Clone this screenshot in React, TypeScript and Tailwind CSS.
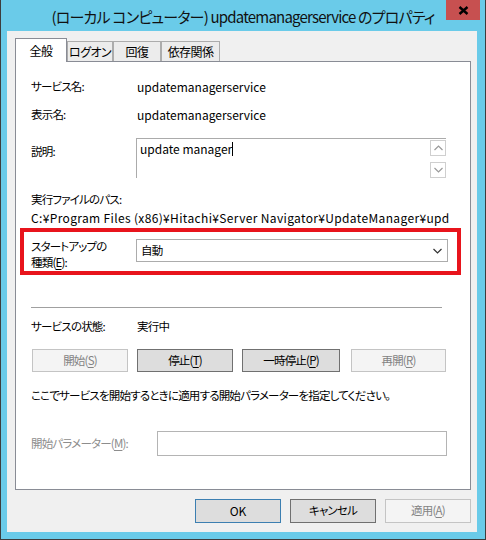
import React from 'react';

const Chevron = ({ up = false, color = '#333' }: { up?: boolean; color?: string }) => (
    <svg width="9" height="6" viewBox="0 0 9 6">
        <path d={up ? 'M0.5 5 L4.5 1 L8.5 5' : 'M0.5 1 L4.5 5 L8.5 1'} fill="none" stroke={color} strokeWidth="1.2" />
    </svg>
);

const Key = ({ k }: { k: string }) => <span className="underline underline-offset-2">{k}</span>;

// latin-only strings keep the normal 12px metrics
const latin = 'text-[12px] tracking-normal';

const Btn = ({ children, w, kind }: { children: React.ReactNode; w: string; kind: 'normal' | 'disabled' | 'default' }) => {
    const styles = {
        normal: 'bg-[#dddddd] border-[#707070] text-black',
        disabled: 'bg-[#f4f4f4] border-[#c4c4c4] text-[#838383]',
        default: 'bg-[#dddddd] border-[#3c7fb1] text-black',
    };
    return <div className={`${w} h-full border flex items-center justify-center ${styles[kind]}`}>{children}</div>;
};

export default function App() {
    return (
        <div className="w-[486px] h-[540px] bg-[#6acbe9] border-x border-b border-[#3d3d3d] flex flex-col font-['Noto_Sans_CJK_JP',sans-serif] [font-feature-settings:'palt'] text-[11.5px] tracking-[-0.8px] text-black">
            {/* title bar */}
            <div className="h-[31px] shrink-0 relative flex items-center justify-center">
                <span className="text-[15px] tracking-[-0.8px] pt-[3px] text-[#111] whitespace-nowrap">(ローカル コンピューター) updatemanagerservice のプロパティ</span>
                <div className="absolute right-[5px] top-0 w-[34px] h-[20px] bg-[#c75050] flex items-center justify-center">
                    <svg width="11" height="9" viewBox="0 0 11 9">
                        <path d="M1.5 1 L9.5 8 M9.5 1 L1.5 8" stroke="#000" strokeWidth="2.4" />
                    </svg>
                </div>
            </div>

            {/* client area */}
            <div className="flex-1 ml-[6px] mr-[8px] mb-[7px] bg-[#f0f0f0] pl-[8px] pr-[6px] pt-[7px] flex flex-col">
                {/* tabs */}
                <div className="h-[23px] flex items-end relative z-10 whitespace-nowrap text-[12px] tracking-[-0.6px]">
                    <div className="w-[52px] h-[24px] -mb-px bg-white border-t border-x border-[#898c95] flex items-center justify-center">全般</div>
                    <div className="w-[46px] h-[20px] bg-[#ececec] border-t border-x border-[#acacac] flex items-center justify-center">ログオン</div>
                    <div className="w-[48px] h-[20px] bg-[#ececec] border-t border-x border-[#acacac] flex items-center justify-center">回復</div>
                    <div className="w-[59px] h-[20px] bg-[#ececec] border-t border-x border-[#acacac] flex items-center justify-center">依存関係</div>
                </div>

                {/* panel */}
                <div className="h-[429px] bg-white border border-[#898c95] pl-[15px] flex flex-col">
                    <div className="mt-[17px] h-[16px] flex items-center">
                        <div className="w-[106px]">サービス名:</div>
                        <div className={latin}>updatemanagerservice</div>
                    </div>
                    <div className="mt-[12px] h-[16px] flex items-center">
                        <div className="w-[106px]">表示名:</div>
                        <div className={latin}>updatemanagerservice</div>
                    </div>
                    <div className="mt-[15px] flex">
                        <div className="w-[105px] pt-[5px] leading-[16px]">説明:</div>
                        <div className="w-[310px] h-[40px] bg-white border-t border-l border-[#ababab] flex">
                            <div className={`flex-1 pl-[3px] pt-[2px] leading-[16px] flex items-start ${latin}`}>
                                <span>update manager</span>
                                <span className="w-px h-[14px] mt-[1px] bg-black" />
                            </div>
                            <div className="w-[16px] flex flex-col pt-px gap-[6px]">
                                <div className="h-[16px] border border-[#cfcfcf] flex items-center justify-center">
                                    <Chevron up color="#9a9a9a" />
                                </div>
                                <div className="h-[16px] border border-[#cfcfcf] flex items-center justify-center">
                                    <Chevron color="#9a9a9a" />
                                </div>
                            </div>
                        </div>
                    </div>
                    <div className="mt-[14px] h-[16px] flex items-center">実行ファイルのパス:</div>
                    <div className="mt-[2px] h-[16px] flex items-center whitespace-nowrap text-[12px] tracking-[0.35px]">
                        C:¥Program Files (x86)¥Hitachi¥Server Navigator¥UpdateManager¥upd
                    </div>

                    {/* highlighted startup type */}
                    <div className="mt-[2px] ml-[-11px] w-[441px] h-[47px] border-4 border-[#e8141c] flex items-start pl-[7px]">
                        <div className="w-[105px] pt-[6px] leading-[16px]">
                            <div>スタートアップの</div>
                            <div>
                                種類(<Key k="E" />):
                            </div>
                        </div>
                        <div className="mt-[7px] w-[312px] h-[23px] bg-white border border-[#acacac] flex items-center justify-between pl-[4px] pr-[5px]">
                            <span>自動</span>
                            <Chevron />
                        </div>
                    </div>

                    <div className="mt-[32px] w-[411px] h-px bg-[#a0a0a0]" />

                    <div className="mt-[11px] h-[16px] flex items-center">
                        <div className="w-[106px]">サービスの状態:</div>
                        <div>実行中</div>
                    </div>

                    <div className="mt-[14px] ml-px h-[23px] flex">
                        <Btn w="w-[96px]" kind="disabled">
                            開始(<Key k="S" />)
                        </Btn>
                        <div className="w-[9px]" />
                        <Btn w="w-[96px]" kind="normal">
                            停止(<Key k="T" />)
                        </Btn>
                        <div className="w-[9px]" />
                        <Btn w="w-[98px]" kind="normal">
                            一時停止(<Key k="P" />)
                        </Btn>
                        <div className="w-[11px]" />
                        <Btn w="w-[95px]" kind="disabled">
                            再開(<Key k="R" />)
                        </Btn>
                    </div>

                    <div className="mt-[16px] h-[16px] flex items-center">
                        ここでサービスを開始するときに適用する開始パラメーターを指定してください。
                    </div>

                    <div className="mt-[27px] flex items-center">
                        <div className="w-[126px] text-[#8d8d8d]">
                            開始パラメーター(<Key k="M" />):
                        </div>
                        <div className="w-[290px] h-[25px] bg-white border border-[#b4b4b4]" />
                    </div>
                </div>

                {/* dialog buttons */}
                <div className="mt-[9px] h-[24px] flex justify-end gap-[9px]">
                    <Btn w="w-[86px]" kind="default">
                        <span className={latin}>OK</span>
                    </Btn>
                    <Btn w="w-[86px]" kind="normal">キャンセル</Btn>
                    <Btn w="w-[86px]" kind="disabled">
                        適用(<Key k="A" />)
                    </Btn>
                </div>
            </div>
        </div>
    );
}
